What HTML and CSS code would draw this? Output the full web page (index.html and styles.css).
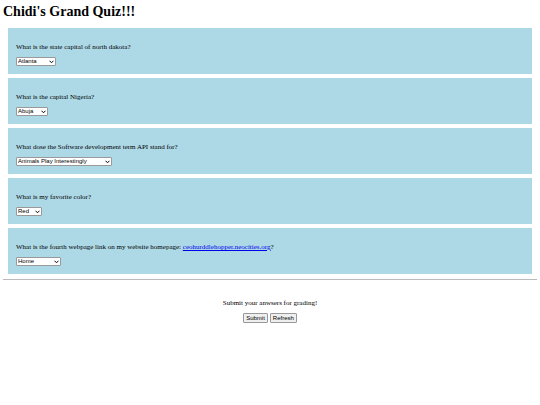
FILE: index.html
```
<!DOCTYPE html>
<html lang="en">
<head>
    <meta charset="UTF-8">
    <meta name="viewport" content="width=device-width, initial-scale=1.0">
    <title>Chidi's Grand Quiz</title>
    <link rel="stylesheet" href="styles.css">
</head>
<body>
    <h1>Chidi's Grand Quiz!!!</h1>

    <form id="quiz">
        <!-- Questions -->
        <div class="question">
            <label for="q1">What is the state capital of north dakota?</label>
            <select id="q1" name="q1" class="city">
                <option>Atlanta</option>
                <option>Bismarck</option>
                <option>Fargo</option>
            </select>
        </div>

        <div class="question">
            <label for="q2">What is the capital Nigeria?</label>
            <select id="q2" name="q2" class="capital">
                <option>Abuja</option>
                <option>Lagos</option>
            </select>
        </div>

        <div class="question">
            <label for="q3">What dose the Software development term API stand for?</label>
            <select id="q3" name="q3" class="phrase">
                <option>Animals Play Interestingly</option>
                <option>Application Interface</option>
            </select>
        </div>

        <div class="question">
            <label for="q4">What is my favorite color?</label>
            <select id="q4" name="q4" class="color">
                <option>Red</option>
                <option>Blue</option>
            </select>
        </div>

        <div class="question">
            <label for="q5">What is the fourth webpage link on my website homepage: <a href="https://ceohurddlehopper.neocities.org">ceohurddlehopper.neocities.org</a>?</label>
            <select id="q5" name="q5" class="page">
                <option>Home</option>
                <option>About Me</option>
                <option>My Projects</option>
            </select>
        </div>

        <hr>

        <!-- Grading -->
        <div class="grading">
            <p>Submit your anwsers for grading!</p>
            <div class="buttons">
                <button type="submit">Submit</button>
                <button type="reset">Refresh</button>
            </div>
        </div>
    </form>
</body>
</html>
```
FILE: styles.css
```
body {
    margin: 3px;
    font-family: "Liberation Serif", "Times New Roman", serif;
    font-size: 7px;
    background-color: white;
}

h1 {
    margin: 0 0 8px;
    font-size: 14px;
    line-height: 17px;
}

.question {
    display: flex;
    flex-direction: column;
    align-items: flex-start;
    gap: 5px;
    margin: 4px 5px;
    padding: 15px 8px 8px;
    background-color: lightblue;
}

.question label {
    line-height: 9px;
}

select,
button {
    box-sizing: border-box;
    border: 1px solid #999;
    border-radius: 1px;
    font-family: "Liberation Sans", Arial, sans-serif;
    font-size: 6px;
    color: black;
}

/* Own arrow, the default one is too big for this text size */
select {
    appearance: none;
    height: 9px;
    padding: 0 8px 0 1px;
    line-height: 7px;
    background: white url("data:image/svg+xml,%3Csvg xmlns='http://www.w3.org/2000/svg' viewBox='0 0 10 7'%3E%3Cpath d='M1 1l4 4 4-4' fill='none' stroke='black' stroke-width='2'/%3E%3C/svg%3E") no-repeat right 1px center / 5px 4px;
}

.city {
    width: 40px;
}

.capital {
    width: 32px;
}

.phrase {
    width: 96px;
}

.color {
    width: 26px;
}

.page {
    width: 45px;
}

hr {
    margin: 5px 0 4px;
    border: 0;
    border-top: 1px solid #bbb;
}

.grading {
    margin-top: 19px;
    text-align: center;
}

.grading p {
    margin: 0 0 5px;
    line-height: 9px;
}

.buttons {
    display: flex;
    justify-content: center;
    gap: 2px;
}

button {
    height: 10px;
    padding: 0 2px;
    line-height: 8px;
    background-color: #efefef;
}
```
